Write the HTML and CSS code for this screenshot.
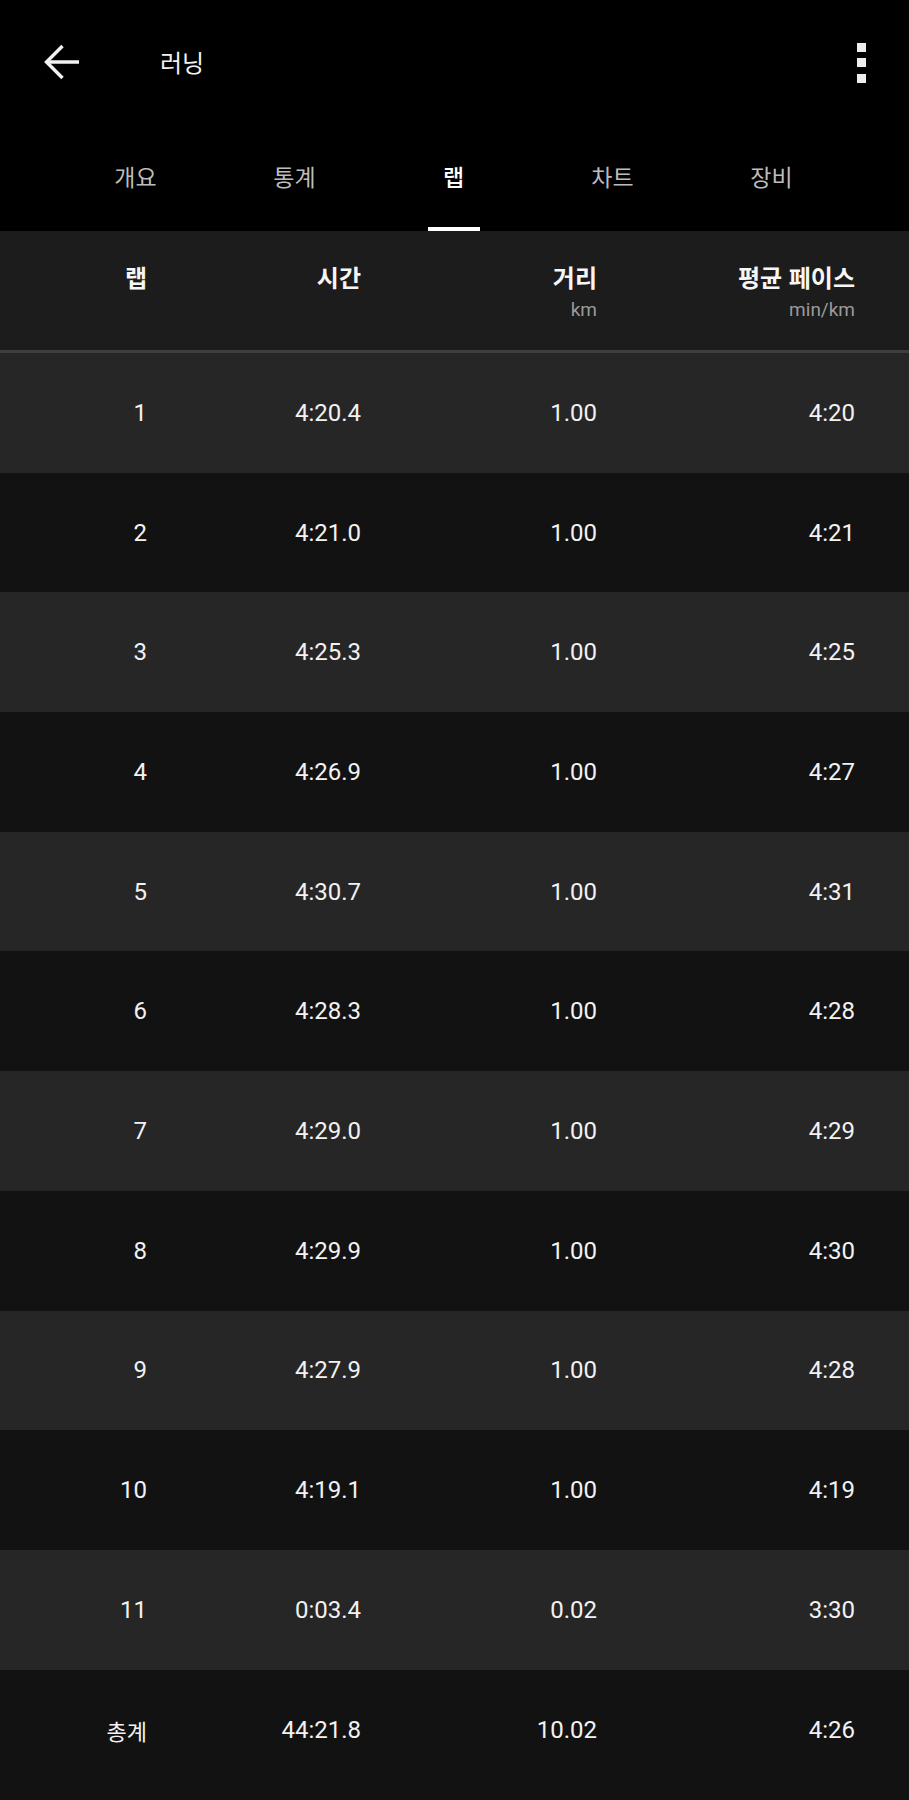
FILE: index.html
```html
<!DOCTYPE html>
<html lang="ko">
<head>
<meta charset="utf-8">
<title>러닝</title>
<link rel="stylesheet" href="styles.css">
</head>
<body>
<div class="app">
  <header class="topbar">
    <div class="back" aria-label="뒤로">
      <svg width="36" height="36" viewBox="0 0 36 36" fill="none" stroke="#f2f2f2" stroke-width="3.4" stroke-linecap="butt" stroke-linejoin="miter">
        <path d="M2.5 18H35"/>
        <path d="M18.5 2L2.5 18L18.5 34"/>
      </svg>
    </div>
    <h1 class="title">러닝</h1>
    <div class="more" aria-label="더보기">
      <span class="dot"></span><span class="dot"></span><span class="dot"></span>
    </div>
  </header>
  <nav class="tabs">
    <div class="tab">개요</div>
    <div class="tab">통계</div>
    <div class="tab active">랩</div>
    <div class="tab">차트</div>
    <div class="tab">장비</div>
  </nav>
  <section class="table">
    <div class="row head">
      <div class="cell"><span class="h">랩</span></div>
      <div class="cell"><span class="h">시간</span></div>
      <div class="cell"><span class="h">거리</span><span class="unit">km</span></div>
      <div class="cell"><span class="h">평균 페이스</span><span class="unit">min/km</span></div>
    </div>
    <div class="row odd"><div class="cell">1</div><div class="cell">4:20.4</div><div class="cell">1.00</div><div class="cell">4:20</div></div>
    <div class="row even"><div class="cell">2</div><div class="cell">4:21.0</div><div class="cell">1.00</div><div class="cell">4:21</div></div>
    <div class="row odd"><div class="cell">3</div><div class="cell">4:25.3</div><div class="cell">1.00</div><div class="cell">4:25</div></div>
    <div class="row even"><div class="cell">4</div><div class="cell">4:26.9</div><div class="cell">1.00</div><div class="cell">4:27</div></div>
    <div class="row odd"><div class="cell">5</div><div class="cell">4:30.7</div><div class="cell">1.00</div><div class="cell">4:31</div></div>
    <div class="row even"><div class="cell">6</div><div class="cell">4:28.3</div><div class="cell">1.00</div><div class="cell">4:28</div></div>
    <div class="row odd"><div class="cell">7</div><div class="cell">4:29.0</div><div class="cell">1.00</div><div class="cell">4:29</div></div>
    <div class="row even"><div class="cell">8</div><div class="cell">4:29.9</div><div class="cell">1.00</div><div class="cell">4:30</div></div>
    <div class="row odd"><div class="cell">9</div><div class="cell">4:27.9</div><div class="cell">1.00</div><div class="cell">4:28</div></div>
    <div class="row even"><div class="cell">10</div><div class="cell">4:19.1</div><div class="cell">1.00</div><div class="cell">4:19</div></div>
    <div class="row odd"><div class="cell">11</div><div class="cell">0:03.4</div><div class="cell">0.02</div><div class="cell">3:30</div></div>
    <div class="row even total"><div class="cell">총계</div><div class="cell">44:21.8</div><div class="cell">10.02</div><div class="cell">4:26</div></div>
  </section>
</div>
</body>
</html>
```
FILE: styles.css
```css
html, body {
  margin: 0;
  padding: 0;
  background: #121212;
}
body {
  font-family: Roboto, "Noto Sans CJK KR", sans-serif;
  color: #f2f2f2;
}
.app {
  width: 909px;
  background: #121212;
}
.topbar {
  height: 124px;
  background: #000;
  display: flex;
  align-items: center;
  padding: 0 43px 0 44px;
  box-sizing: border-box;
}
.back {
  width: 36px;
  height: 36px;
  display: flex;
}
.title {
  margin: 0 0 0 80px;
  font-family: "Noto Sans CJK KR", sans-serif;
  font-weight: 400;
  font-size: 24px;
  color: #f2f2f2;
  flex: 1;
  line-height: 1;
}
.more {
  display: flex;
  flex-direction: column;
  gap: 6.5px;
  margin-top: 1px;
}
.dot {
  width: 9px;
  height: 9px;
  background: #eeeeee;
  display: block;
}
.tabs {
  height: 107px;
  background: #000;
  display: grid;
  grid-template-columns: repeat(5, 159px);
  padding-left: 56px;
}
.tab {
  position: relative;
  display: flex;
  align-items: center;
  justify-content: center;
  font-family: "Noto Sans CJK KR", sans-serif;
  font-size: 23px;
  color: #bcbcbc;
  padding-bottom: 3px;
}
.tab.active {
  color: #fff;
  font-weight: 500;
}
.tab.active::after {
  content: "";
  position: absolute;
  left: 50%;
  bottom: 0;
  width: 52px;
  height: 4px;
  margin-left: -26px;
  background: #fff;
}
.row {
  display: grid;
  grid-template-columns: 147px 214px 236px 1fr;
  padding-right: 54px;
  height: 119.7px;
  align-items: center;
  font-size: 24px;
}
.cell {
  text-align: right;
  white-space: nowrap;
}
.row.head {
  background: #1c1c1c;
  border-bottom: 3px solid #3e3e3e;
  align-items: start;
  box-sizing: border-box;
  height: 122px;
  padding-top: 31px;
}
.row.head .cell {
  display: flex;
  flex-direction: column;
  align-items: flex-end;
}
.h {
  font-family: "Noto Sans CJK KR", sans-serif;
  font-weight: 700;
  font-size: 24px;
  line-height: 30px;
  color: #f6f6f6;
}
.unit {
  font-family: Roboto, sans-serif;
  font-size: 19px;
  line-height: 22px;
  margin-top: 7px;
  color: #9a9a9a;
}
.odd {
  background: #262626;
}
.even {
  background: #121212;
}
.total {
  height: 128px;
  padding-bottom: 8px;
  box-sizing: border-box;
}
.total .cell:first-child {
  font-family: "Noto Sans CJK KR", sans-serif;
  font-size: 22px;
}
```
